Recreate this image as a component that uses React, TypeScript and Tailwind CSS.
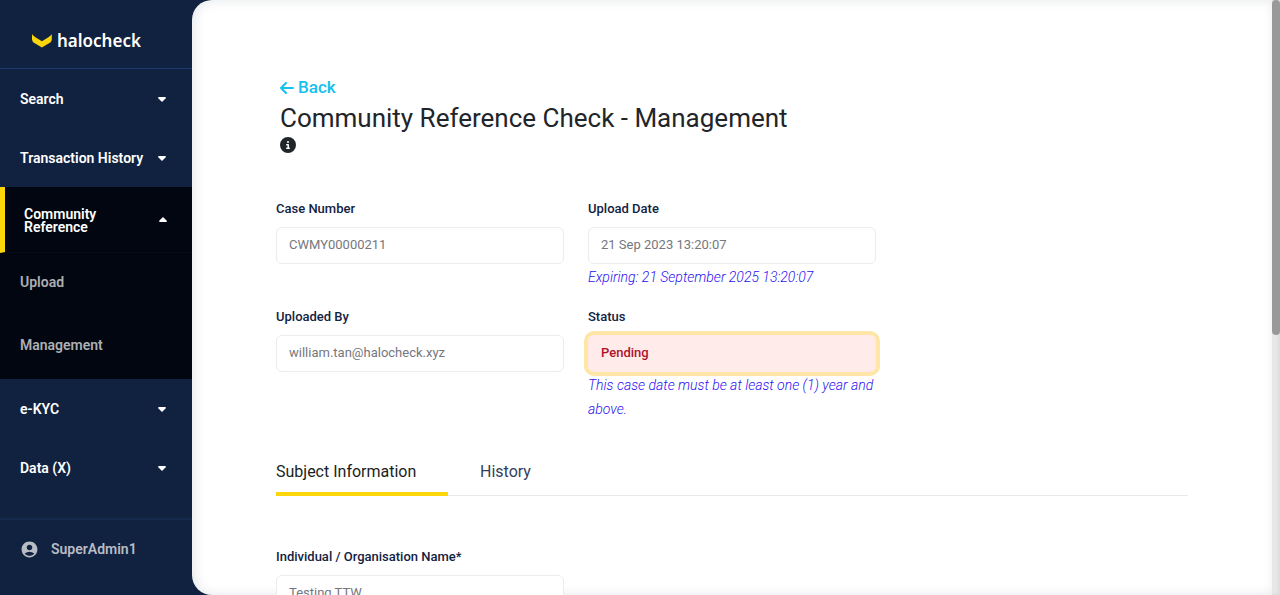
import { useId } from "react";
import type { ReactNode } from "react";
import { FaCircleInfo } from "react-icons/fa6";
import { MdAccountCircle } from "react-icons/md";

function Logo() {
  return (
    <a href="#home" className="flex h-[69px] shrink-0 items-center gap-1 border-b border-[#1c3a70] pt-[13px] pl-8">
      <svg viewBox="0 0 20 14" className="h-[14px] w-5 fill-[#fbd60a]" aria-hidden="true">
        <path d="M0 0 C0.8 1.4 2 2.3 3.4 3.2 L9.9 7.2 L16.4 3.2 C17.8 2.3 19 1.4 19.8 0 V5.2 C19.6 7.2 18.8 8.2 17.4 9.1 L9.9 13.6 L2.4 9.1 C1 8.2 0.2 7.2 0 5.2 Z" />
      </svg>
      <span className="pl-[1px] font-['Noto_Sans',sans-serif] text-[17px] leading-5 font-semibold text-white">halocheck</span>
    </a>
  );
}

function Caret({ up = false }: { up?: boolean }) {
  return (
    <svg viewBox="0 0 8 5" className="h-[5px] w-2 shrink-0 fill-white" aria-hidden="true">
      {up ? <path d="M4 0 L7.8 3.7 Q8 5 7.2 5 H0.8 Q0 5 0.2 3.7 Z" /> : <path d="M4 5 L0.2 1.3 Q0 0 0.8 0 H7.2 Q8 0 7.8 1.3 Z" />}
    </svg>
  );
}

function MenuItem({ label }: { label: string }) {
  return (
    <button type="button" className="flex h-[59px] w-full shrink-0 items-center justify-between pt-[2px] pr-[26px] pl-5 text-left text-sm leading-[13px] font-semibold text-white">
      {label}
      <Caret />
    </button>
  );
}

function SubItem({ label }: { label: string }) {
  return (
    <a href={`#${label.toLowerCase()}`} className="flex h-[63px] items-center px-5 pb-[5px] text-sm leading-4 font-semibold text-[#adafb3]">
      {label}
    </a>
  );
}

function Field({ label, value, note, pending = false }: { label: string; value: string; note?: ReactNode; pending?: boolean }) {
  const id = useId();
  return (
    <div>
      <label htmlFor={id} className="mb-2 block text-[13px] leading-5 font-medium text-[#12223f]">
        {label}
      </label>
      <input
        id={id}
        readOnly
        defaultValue={value}
        className={
          pending
            ? "block h-[37px] w-full rounded-md border border-[#ffe8e5] bg-[#ffebe9] px-3 pb-[3px] text-[13px] font-medium text-[#b0102c] outline-4 outline-[#ffe6a6]"
            : "block h-[37px] w-full rounded-md border border-[#ececee] bg-white px-3 pb-[3px] text-[13px] text-[#75777e] outline-none"
        }
      />
      {note && <p className="pt-[1px] text-sm leading-6 font-light text-[#2a10f0] italic">{note}</p>}
    </div>
  );
}

export default function App() {
  return (
    <div className="flex h-screen overflow-hidden bg-[#112240] font-[Roboto,sans-serif]">
      <nav className="flex w-48 shrink-0 flex-col">
        <Logo />
        <MenuItem label="Search" />
        <MenuItem label="Transaction History" />
        <div className="shrink-0 bg-[#010610]">
          <button type="button" className="flex h-[66px] w-full items-center justify-between border-b border-l-5 border-b-[#070d18] border-l-[#fbd60a] pr-[25px] pl-[19px] text-left text-sm leading-[13px] font-semibold text-white">
            <span className="w-24 pt-[2px]">Community Reference</span>
            <Caret up />
          </button>
          <SubItem label="Upload" />
          <SubItem label="Management" />
        </div>
        <MenuItem label="e-KYC" />
        <MenuItem label="Data (X)" />
        <a href="#account" className="mt-[21px] flex h-[60px] shrink-0 items-center gap-3 border-t-2 border-[#152a4c] px-5 text-sm font-semibold text-[#b8bcc4]">
          <MdAccountCircle className="size-[19px]" />
          SuperAdmin1
        </a>
      </nav>

      <div className="flex min-w-0 flex-1 overflow-hidden rounded-l-[20px] bg-white">
        <main className="min-w-0 flex-1 overflow-hidden rounded-l-[20px] pt-[76px] pr-[84px] pl-[84px] shadow-[inset_2px_0_12px_rgba(17,34,64,0.11)]">
          <header className="pl-1 text-[#212529]">
            <a href="#back" className="flex h-6 w-fit items-center gap-1 text-[17px] font-medium text-[#14c0ee]">
              <svg viewBox="0 0 14 12" className="h-3 w-[14px] fill-none stroke-current stroke-2" strokeLinecap="round" strokeLinejoin="round" aria-hidden="true">
                <path d="M6 1 L1 6 L6 11 M1 6 H13" />
              </svg>
              Back
            </a>
            <h1 className="text-[26px] leading-9 font-normal">Community Reference Check - Management</h1>
            <FaCircleInfo className="mt-[1px] size-4" />
          </header>

          <form className="mt-[46px]">
            <div className="grid max-w-[600px] grid-cols-2 gap-x-6 gap-y-[18px]">
              <Field label="Case Number" value="CWMY00000211" />
              <Field label="Upload Date" value="21 Sep 2023 13:20:07" note="Expiring: 21 September 2025 13:20:07" />
              <Field label="Uploaded By" value="william.tan@halocheck.xyz" />
              <Field label="Status" value="Pending" pending note="This case date must be at least one (1) year and above." />
            </div>

            <div role="tablist" className="mt-9 flex h-[39px] gap-8 border-b border-[#e9e9eb] text-base leading-6">
              <button type="button" role="tab" aria-selected="true" className="-mb-[1px] flex w-[172px] items-start border-b-4 border-[#fbd60a] pt-[3px] text-[#1b1e22]">
                Subject Information
              </button>
              <button type="button" role="tab" aria-selected="false" className="flex items-start pt-[3px] text-[#33415c]">
                History
              </button>
            </div>

            <div className="mt-[51px] grid max-w-[600px] grid-cols-2 gap-x-6">
              <Field label="Individual / Organisation Name*" value="Testing TTW" />
            </div>
          </form>
        </main>
        <div className="w-2 shrink-0 bg-[#e8e8e8] shadow-[inset_-2px_0_4px_rgba(0,0,0,0.06)]" aria-hidden="true">
          <div className="h-[335px] rounded-full bg-[#999999]" />
        </div>
      </div>
    </div>
  );
}
